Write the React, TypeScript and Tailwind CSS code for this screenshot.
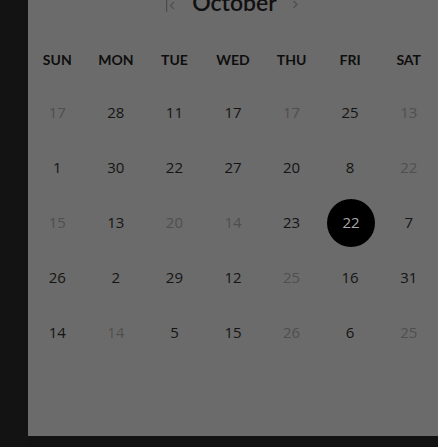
import React from "react";

type Cell = { n: number; f?: boolean; s?: boolean };

const rows: Cell[][] = [
  [{ n: 17, f: true }, { n: 28 }, { n: 11 }, { n: 17 }, { n: 17, f: true }, { n: 25 }, { n: 13, f: true }],
  [{ n: 1 }, { n: 30 }, { n: 22 }, { n: 27 }, { n: 20 }, { n: 8 }, { n: 22, f: true }],
  [{ n: 15, f: true }, { n: 13 }, { n: 20, f: true }, { n: 14, f: true }, { n: 23 }, { n: 22, s: true }, { n: 7 }],
  [{ n: 26 }, { n: 2 }, { n: 29 }, { n: 12 }, { n: 25, f: true }, { n: 16 }, { n: 31 }],
  [{ n: 14 }, { n: 14, f: true }, { n: 5 }, { n: 15 }, { n: 26, f: true }, { n: 6 }, { n: 25, f: true }],
];

const days = ["SUN", "MON", "TUE", "WED", "THU", "FRI", "SAT"];

export default function App() {
  return (
    <div
      className="w-[438px] h-[447px] bg-[#121212] flex overflow-hidden"
      style={{ fontFamily: "Lato, 'Open Sans', sans-serif" }}
    >
      <div className="w-[28px] shrink-0 bg-[#131313]" />
      <div className="flex-1 h-[436px] bg-[#6b6b6b] flex flex-col">
        <div className="-mt-[11px] h-[26px] flex items-start justify-center">
          <svg width="10" height="16" viewBox="0 0 10 16" className="mt-[11px]">
            <line x1="0.6" y1="0" x2="0.6" y2="12" stroke="#4a4a4a" strokeWidth="1.2" />
            <polyline points="8,2 4.5,5.5 8,9" fill="none" stroke="#4f4f4f" strokeWidth="1.2" />
          </svg>
          <span className="mt-[2px] ml-[16px] mr-[15px] text-[23px] font-semibold leading-none text-[#111]">
            October
          </span>
          <svg width="8" height="12" viewBox="0 0 8 12" className="mt-[11px]">
            <polyline points="1.5,1 5,4.5 1.5,8" fill="none" stroke="#4f4f4f" strokeWidth="1.2" />
          </svg>
        </div>
        <div className="mt-[24px] h-[40px] grid grid-cols-7 items-center">
          {days.map((d) => (
            <div key={d} className="text-center text-[14px] font-bold text-[#0e0e0e]">
              {d}
            </div>
          ))}
        </div>
        <div className="mt-[6px] flex flex-col" style={{ fontFamily: "'Open Sans', sans-serif" }}>
          {rows.map((r, i) => (
            <div key={i} className="h-[55px] grid grid-cols-7 items-center">
              {r.map((c, j) => (
                <div key={j} className="flex justify-center items-center">
                  {c.s ? (
                    <div className="w-[48px] h-[48px] ml-[2px] rounded-full bg-black flex items-center justify-center text-[15px] text-[#a8a8a8]">
                      {c.n}
                    </div>
                  ) : (
                    <span className={"text-[15px] " + (c.f ? "text-[#4f4f4f]" : "text-[#141414]")}>
                      {c.n}
                    </span>
                  )}
                </div>
              ))}
            </div>
          ))}
        </div>
      </div>
    </div>
  );
}
